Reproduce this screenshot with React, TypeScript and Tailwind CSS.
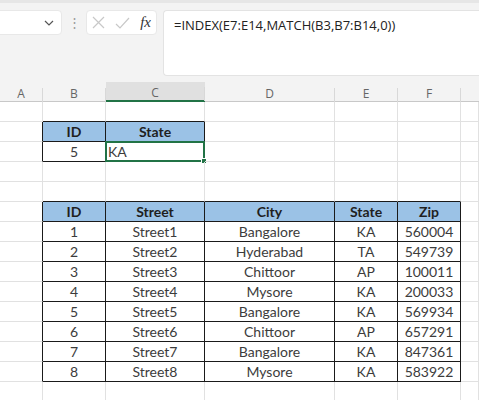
import React from "react";

const COLS = ["A", "B", "C", "D", "E", "F", ""];

const data: string[][] = [
  ["1", "Street1", "Bangalore", "KA", "560004"],
  ["2", "Street2", "Hyderabad", "TA", "549739"],
  ["3", "Street3", "Chittoor", "AP", "100011"],
  ["4", "Street4", "Mysore", "KA", "200033"],
  ["5", "Street5", "Bangalore", "KA", "569934"],
  ["6", "Street6", "Chittoor", "AP", "657291"],
  ["7", "Street7", "Bangalore", "KA", "847361"],
  ["8", "Street8", "Mysore", "KA", "583922"],
];

// row, col -> content / header flag
function cellInfo(r: number, c: number): { text: string; head: boolean; table: boolean; left?: boolean } {
  if (r === 2 && (c === 1 || c === 2)) return { text: c === 1 ? "ID" : "State", head: true, table: true };
  if (r === 3 && c === 1) return { text: "5", head: false, table: true };
  if (r === 3 && c === 2) return { text: "KA", head: false, table: true, left: true };
  if (r === 6 && c >= 1 && c <= 5)
    return { text: ["ID", "Street", "City", "State", "Zip"][c - 1], head: true, table: true };
  if (r >= 7 && r <= 14 && c >= 1 && c <= 5) return { text: data[r - 7][c - 1], head: false, table: true };
  return { text: "", head: false, table: false };
}

const isTable = (r: number, c: number) => cellInfo(r, c).table;

function Toolbar() {
  return (
    <div className="h-[82px] bg-[#f3f3f3] border-t-[3px] border-[#e6e6e6] flex items-start pt-[7px] gap-[6px]">
      <div className="ml-[-20px] w-[82px] h-[25px] bg-white rounded-[4px] border border-[#e8e8e8] flex items-center justify-end pr-[7px]">
        <svg width="10" height="6" viewBox="0 0 10 6" fill="none" stroke="#555" strokeWidth="1.2">
          <path d="M1 1l4 4 4-4" />
        </svg>
      </div>
      <div className="w-[12px] h-[25px] flex items-center justify-center text-[#9a9a9a] text-[13px]">⋮</div>
      <div className="w-[71px] h-[25px] bg-white rounded-[4px] border border-[#e8e8e8] flex items-center justify-between px-[5px]">
        <svg width="13" height="13" viewBox="0 0 13 13" fill="none" stroke="#c8c8c8" strokeWidth="1.2">
          <path d="M1 1l11 11M12 1L1 12" />
        </svg>
        <svg width="15" height="12" viewBox="0 0 15 12" fill="none" stroke="#c8c8c8" strokeWidth="1.2">
          <path d="M1 7l4 4 9-10" />
        </svg>
        <span className="text-[15px] italic text-[#333] leading-none" style={{ fontFamily: '"Liberation Serif", serif' }}>
          fx
        </span>
      </div>
      <div className="flex-1 h-[66px] bg-white rounded-l-[4px] border border-[#e3e3e3] border-r-0 pl-[10px] pt-[5px] text-[13px] text-[#222]" style={{ fontFamily: '"Open Sans", sans-serif' }}>
        =INDEX(E7:E14,MATCH(B3,B7:B14,0))
      </div>
    </div>
  );
}

export default function App() {
  const rows = Array.from({ length: 15 }, (_, i) => i + 1);
  return (
    <div className="w-[479px] h-[400px] overflow-hidden bg-white" style={{ fontFamily: "Lato, sans-serif" }}>
      <Toolbar />
      <div className="grid grid-cols-[43px_63px_99px_130px_63px_63px_1fr]">
        {COLS.map((c, i) => (
          <div
            key={c + i}
            className={`h-[20px] flex items-center justify-center text-[12px] text-[#666] ${
              i === 2 ? "bg-[#e0e0e0] border-b-2 border-[#217346]" : "bg-[#f3f3f3] border-b border-[#c8c8c8]"
            }`}
            style={{ fontFamily: '"Open Sans", sans-serif' }}
          >
            <div className={`flex-1 text-center ${i < 6 ? "border-r border-[#d8d8d8] h-[14px] mt-[6px] leading-[12px]" : ""}`}>
              {c}
            </div>
          </div>
        ))}
        {rows.map((r) =>
          COLS.map((_, c) => {
            const info = cellInfo(r, c);
            const right = isTable(r, c) || isTable(r, c + 1);
            const bottom = isTable(r, c) || isTable(r + 1, c);
            const active = r === 3 && c === 2;
            return (
              <div
                key={`${r}-${c}`}
                className={`relative h-[20px] border-r border-b flex items-center text-[14px] leading-none ${
                  right ? "border-r-[#1a1a1a]" : "border-r-[#e1e1e1]"
                } ${bottom ? "border-b-[#1a1a1a]" : "border-b-[#e1e1e1]"} ${
                  info.head ? "bg-[#9bc2e6] font-bold text-[#1f1f1f]" : "text-[#3c3c3c]"
                } ${info.left ? "justify-start pl-[2px]" : "justify-center"}`}
              >
                {info.text}
                {active && (
                  <div className="absolute left-[-1px] top-[-1px] right-[-1px] bottom-[-1px] border-2 border-[#217346]">
                    <div className="absolute right-[-4px] bottom-[-4px] w-[6px] h-[6px] bg-[#217346] border border-white" />
                  </div>
                )}
              </div>
            );
          })
        )}
      </div>
    </div>
  );
}
